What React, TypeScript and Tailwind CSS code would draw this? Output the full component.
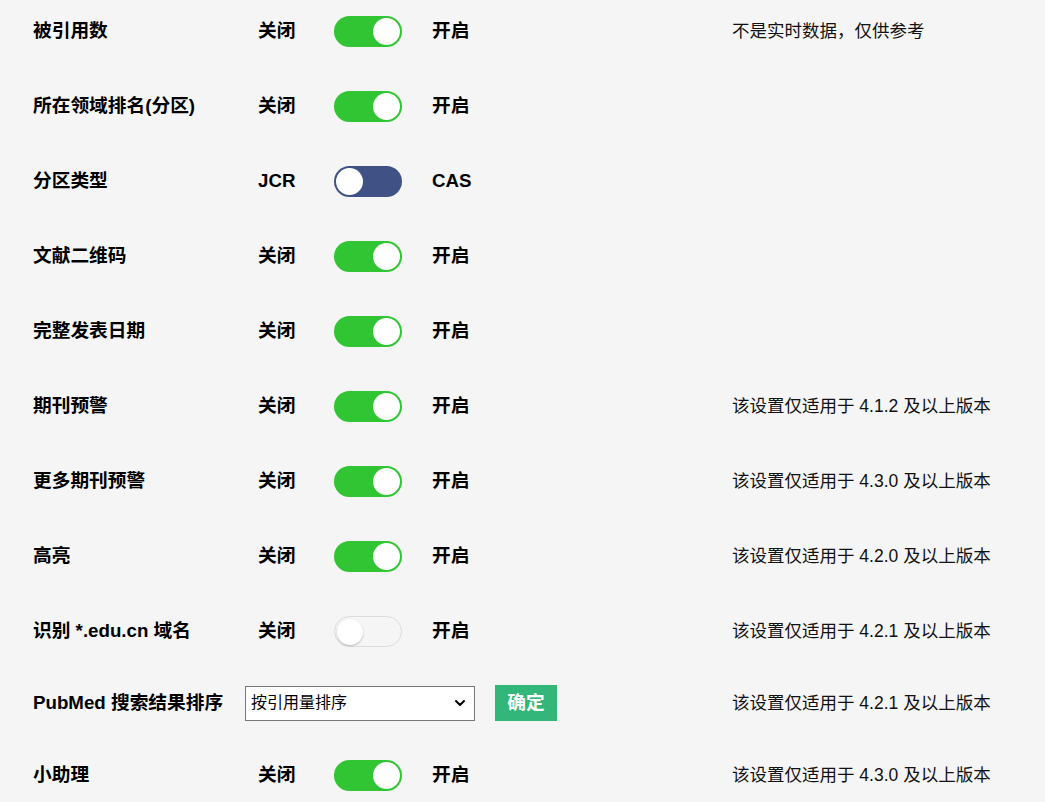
import { ChevronDown } from "lucide-react";

const font = "font-['Liberation_Sans','Noto_Sans_CJK_SC',sans-serif]";

type Row = {
  label: string;
  off: string;
  on: string;
  state: "on" | "off" | "blue";
  note?: string;
};

const rows: Row[] = [
  { label: "被引用数", off: "关闭", on: "开启", state: "on", note: "不是实时数据，仅供参考" },
  { label: "所在领域排名(分区)", off: "关闭", on: "开启", state: "on" },
  { label: "分区类型", off: "JCR", on: "CAS", state: "blue" },
  { label: "文献二维码", off: "关闭", on: "开启", state: "on" },
  { label: "完整发表日期", off: "关闭", on: "开启", state: "on" },
  { label: "期刊预警", off: "关闭", on: "开启", state: "on", note: "该设置仅适用于 4.1.2 及以上版本" },
  { label: "更多期刊预警", off: "关闭", on: "开启", state: "on", note: "该设置仅适用于 4.3.0 及以上版本" },
  { label: "高亮", off: "关闭", on: "开启", state: "on", note: "该设置仅适用于 4.2.0 及以上版本" },
  { label: "识别 *.edu.cn 域名", off: "关闭", on: "开启", state: "off", note: "该设置仅适用于 4.2.1 及以上版本" },
];

function Toggle({ state }: { state: Row["state"] }) {
  if (state === "on") {
    return (
      <div className="flex h-[31px] w-[68px] items-center justify-end rounded-full bg-[#31c433] pr-[2px]">
        <div className="h-[27px] w-[27px] rounded-full bg-white" />
      </div>
    );
  }
  if (state === "blue") {
    return (
      <div className="flex h-[31px] w-[68px] items-center justify-start rounded-full bg-[#3f5185] pl-[2px]">
        <div className="h-[27px] w-[27px] rounded-full bg-white" />
      </div>
    );
  }
  return (
    <div className="flex h-[31px] w-[68px] items-center justify-start rounded-full border border-[#dcdcdc] bg-[#f5f5f5] pl-[2px]">
      <div className="h-[26px] w-[26px] rounded-full bg-white shadow-[0_1px_2px_rgba(0,0,0,0.25)]" />
    </div>
  );
}

function SettingRow({ row }: { row: Row }) {
  return (
    <div className="flex h-[75px] items-center">
      <div className="w-[225px] text-[18.72px] font-bold text-black">{row.label}</div>
      <div className="w-[76px] text-[18.72px] font-bold text-black">{row.off}</div>
      <Toggle state={row.state} />
      <div className="ml-[30px] w-[300px] text-[18.72px] font-bold text-black">{row.on}</div>
      <div className="text-[17.5px] text-[#111]">{row.note}</div>
    </div>
  );
}

export default function App() {
  return (
    <div className={`min-h-[802px] bg-[#f5f5f5] pl-[33px] ${font}`}>
      <div className="-mt-[6px]">
        {rows.map((row) => (
          <SettingRow key={row.label} row={row} />
        ))}
      </div>
      <div className="-mt-[2px] flex h-[72px] items-center">
        <div className="w-[212px] text-[18.72px] font-bold text-black">PubMed 搜索结果排序</div>
        <div className="flex h-[35px] w-[230px] items-center justify-between border border-[#767676] bg-white pl-[5px] pr-[6px]">
          <span className="text-[16px] text-black">按引用量排序</span>
          <ChevronDown size={16} strokeWidth={3} className="text-black" />
        </div>
        <button className="ml-[20px] h-[36px] w-[62px] bg-[#33b679] text-[18.72px] font-bold text-white">确定</button>
        <div className="ml-[175px] text-[17.5px] text-[#111]">该设置仅适用于 4.2.1 及以上版本</div>
      </div>
      <div className="flex h-[72px] items-center">
        <div className="w-[225px] text-[18.72px] font-bold text-black">小助理</div>
        <div className="w-[76px] text-[18.72px] font-bold text-black">关闭</div>
        <Toggle state="on" />
        <div className="ml-[30px] w-[300px] text-[18.72px] font-bold text-black">开启</div>
        <div className="text-[17.5px] text-[#111]">该设置仅适用于 4.3.0 及以上版本</div>
      </div>
    </div>
  );
}
